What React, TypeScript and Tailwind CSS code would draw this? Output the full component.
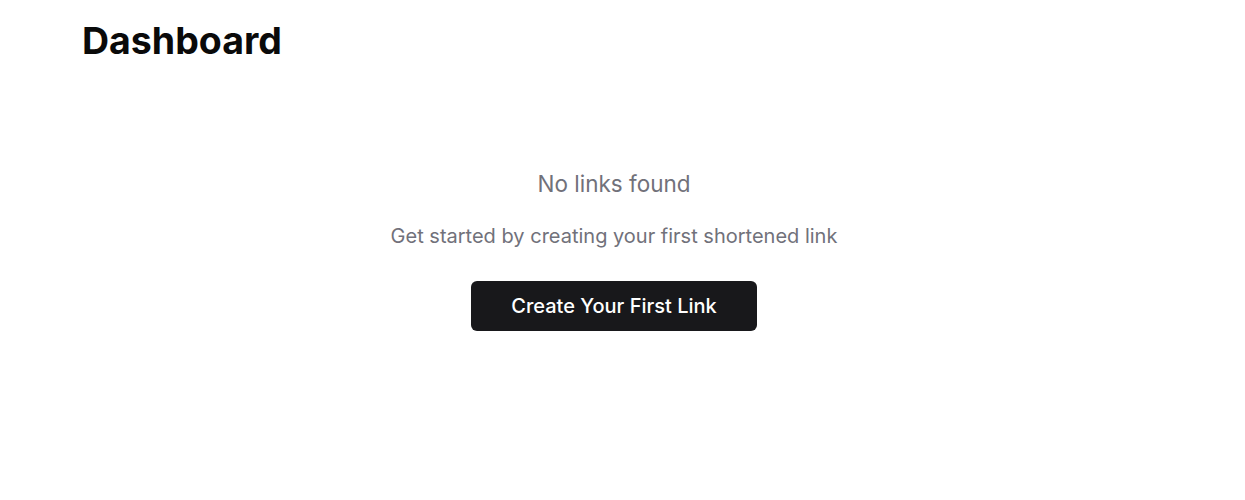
import React from "react";

export default function App() {
  return (
    <div className="min-h-screen bg-white text-[#0a0a0a]" style={{ fontFamily: "Inter, 'Liberation Sans', sans-serif" }}>
      <div className="w-[1230px] pl-[82px] pr-[84px] pt-[21px]">
        <h1 className="text-[37.5px] leading-10 font-bold">Dashboard</h1>
        <div className="mt-[109px] flex flex-col items-center">
          <p className="text-[22.5px] leading-7 text-[#71717a]">No links found</p>
          <p className="mt-6 text-[20px] leading-7 text-[#71717a]">Get started by creating your first shortened link</p>
          <button className="mt-[31px] h-[50px] rounded-md bg-[#18181b] px-10 text-[20px] font-medium text-white">
            Create Your First Link
          </button>
        </div>
      </div>
    </div>
  );
}
